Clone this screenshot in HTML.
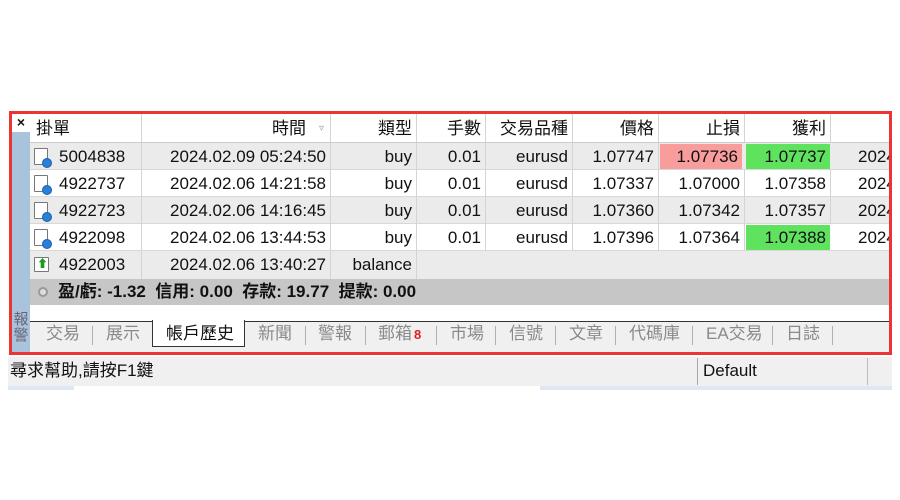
<!DOCTYPE html>
<html><head><meta charset="utf-8"><style>
*{margin:0;padding:0;box-sizing:border-box}
body{width:900px;height:500px;background:#fff;position:relative;overflow:hidden;font-family:"Liberation Sans","Noto Sans CJK TC",sans-serif;font-size:17px;color:#111}
.a{position:absolute}
.c{position:absolute;height:100%;top:0;text-align:right;padding-right:4px;line-height:27px;white-space:nowrap;overflow:hidden}
.row{position:absolute;left:30px;width:859px;height:27px;border-bottom:1px solid #d8d8d8;overflow:hidden}
.g{background:#ebebeb}
.w{background:#fff}
.bd{border-right:1px solid #d4d4d4}
.tab{position:absolute;top:322px;color:#8a8a8a;font-size:17px;line-height:24px}
.sep{position:absolute;top:326px;width:1px;height:19px;background:#b0b0b0}
.ic{position:absolute;left:4px;top:5px;width:14px;height:17px;border:1px solid #777;background:#fff;border-radius:1px}
.ic .d{position:absolute;right:-5px;bottom:-4px;width:10px;height:10px;border-radius:50%;background:#2a7fd8;border:1px solid #1a5fb0}
</style></head><body>
<div class="a" style="left:9px;top:111px;width:883px;height:244px;border:3px solid #ee3333"></div>
<div class="a" style="left:12px;top:114px;width:18px;height:238px;background:#a9c3dd"></div>
<div class="a" style="left:12px;top:114px;width:18px;height:18px;background:#fff;font-size:14px;font-weight:bold;text-align:center;line-height:16px">×</div>
<div class="a" style="left:12px;top:312px;width:18px;font-size:15px;color:#667;line-height:16px;text-align:center">報<br>警</div>
<!-- header -->
<div class="row w" style="top:114px;height:29px;border-bottom:1px solid #ccc">
<div class="c bd" style="left:0;width:112px;text-align:left;padding-left:6px;line-height:29px">掛單</div>
<div class="c bd" style="left:112px;width:189px;line-height:29px;padding-right:24px">時間<span style="position:absolute;right:6px;font-size:10px;color:#999">▿</span></div>
<div class="c bd" style="left:301px;width:86px;line-height:29px">類型</div>
<div class="c bd" style="left:387px;width:69px;line-height:29px">手數</div>
<div class="c bd" style="left:456px;width:87px;line-height:29px">交易品種</div>
<div class="c bd" style="left:543px;width:86px;line-height:29px">價格</div>
<div class="c bd" style="left:629px;width:86px;line-height:29px">止損</div>
<div class="c bd" style="left:715px;width:86px;line-height:29px">獲利</div>
</div>
<div class="row g" style="top:143px">
<div class="c bd" style="left:0;width:112px;text-align:left;padding-left:29px"><span class="ic"><span class="d"></span></span>5004838</div>
<div class="c bd" style="left:112px;width:189px">2024.02.09 05:24:50</div>
<div class="c bd" style="left:301px;width:86px">buy</div>
<div class="c bd" style="left:387px;width:69px">0.01</div>
<div class="c bd" style="left:456px;width:87px">eurusd</div>
<div class="c bd" style="left:543px;width:86px">1.07747</div>
<div class="c" style="left:630px;width:82px;height:25px;top:1px;line-height:25px;background:#f89c9c">1.07736</div>
<div class="c" style="left:716px;width:84px;height:25px;top:1px;line-height:25px;background:#5fe35f">1.07737</div>
<div class="c" style="left:801px;width:80px;text-align:left;padding-left:27px">2024</div>
</div>
<div class="row w" style="top:170px">
<div class="c bd" style="left:0;width:112px;text-align:left;padding-left:29px"><span class="ic"><span class="d"></span></span>4922737</div>
<div class="c bd" style="left:112px;width:189px">2024.02.06 14:21:58</div>
<div class="c bd" style="left:301px;width:86px">buy</div>
<div class="c bd" style="left:387px;width:69px">0.01</div>
<div class="c bd" style="left:456px;width:87px">eurusd</div>
<div class="c bd" style="left:543px;width:86px">1.07337</div>
<div class="c bd" style="left:629px;width:86px">1.07000</div>
<div class="c bd" style="left:715px;width:86px">1.07358</div>
<div class="c" style="left:801px;width:80px;text-align:left;padding-left:27px">2024</div>
</div>
<div class="row g" style="top:197px">
<div class="c bd" style="left:0;width:112px;text-align:left;padding-left:29px"><span class="ic"><span class="d"></span></span>4922723</div>
<div class="c bd" style="left:112px;width:189px">2024.02.06 14:16:45</div>
<div class="c bd" style="left:301px;width:86px">buy</div>
<div class="c bd" style="left:387px;width:69px">0.01</div>
<div class="c bd" style="left:456px;width:87px">eurusd</div>
<div class="c bd" style="left:543px;width:86px">1.07360</div>
<div class="c bd" style="left:629px;width:86px">1.07342</div>
<div class="c bd" style="left:715px;width:86px">1.07357</div>
<div class="c" style="left:801px;width:80px;text-align:left;padding-left:27px">2024</div>
</div>
<div class="row w" style="top:224px">
<div class="c bd" style="left:0;width:112px;text-align:left;padding-left:29px"><span class="ic"><span class="d"></span></span>4922098</div>
<div class="c bd" style="left:112px;width:189px">2024.02.06 13:44:53</div>
<div class="c bd" style="left:301px;width:86px">buy</div>
<div class="c bd" style="left:387px;width:69px">0.01</div>
<div class="c bd" style="left:456px;width:87px">eurusd</div>
<div class="c bd" style="left:543px;width:86px">1.07396</div>
<div class="c bd" style="left:629px;width:86px">1.07364</div>
<div class="c" style="left:716px;width:84px;height:25px;top:1px;line-height:25px;background:#5fe35f">1.07388</div>
<div class="c" style="left:801px;width:80px;text-align:left;padding-left:27px">2024</div>
</div>
<div class="row g" style="top:251px;border-bottom:none;height:28px">
<div class="c bd" style="left:0;width:112px;text-align:left;padding-left:29px"><span class="ic" style="width:15px;height:15px;top:6px"><span style="position:absolute;left:2px;top:0;color:#1a9a1a;font-size:11px;line-height:13px">⬆</span></span>4922003</div>
<div class="c bd" style="left:112px;width:189px">2024.02.06 13:40:27</div>
<div class="c bd" style="left:301px;width:86px">balance</div>
</div>
<div class="a" style="left:30px;top:279px;width:859px;height:26px;background:#c6c6c6;font-weight:bold;line-height:26px;padding-left:28px;white-space:nowrap">盈/虧: -1.32&nbsp; 信用: 0.00&nbsp; 存款: 19.77&nbsp; 提款: 0.00
<span style="position:absolute;left:8px;top:8px;width:10px;height:10px;border-radius:50%;border:2px solid #999;background:#ddd"></span></div>
<div class="a" style="left:30px;top:305px;width:859px;height:16px;background:#fff"></div>
<div class="a" style="left:30px;top:321px;width:859px;height:31px;background:#f0f0f0;border-top:1px solid #333"></div>
<div class="a" style="left:152px;top:320px;width:93px;height:27px;background:#fff;border:1px solid #333;border-top:none"></div>
<div class="tab" style="left:46px">交易</div><div class="sep" style="left:92px"></div>
<div class="tab" style="left:106px">展示</div>
<div class="tab" style="left:166px;color:#111">帳戶歷史</div>
<div class="tab" style="left:258px">新聞</div><div class="sep" style="left:305px"></div>
<div class="tab" style="left:318px">警報</div><div class="sep" style="left:365px"></div>
<div class="tab" style="left:378px">郵箱<span style="color:#e02020;font-weight:bold;font-size:13px;margin-left:2px">8</span></div><div class="sep" style="left:436px"></div>
<div class="tab" style="left:450px">市場</div><div class="sep" style="left:495px"></div>
<div class="tab" style="left:509px">信號</div><div class="sep" style="left:555px"></div>
<div class="tab" style="left:569px">文章</div><div class="sep" style="left:615px"></div>
<div class="tab" style="left:629px">代碼庫</div><div class="sep" style="left:692px"></div>
<div class="tab" style="left:706px">EA交易</div><div class="sep" style="left:772px"></div>
<div class="tab" style="left:786px">日誌</div><div class="sep" style="left:832px"></div>
<!-- status -->
<div class="a" style="left:8px;top:357px;width:884px;height:29px;background:#f0f0f0;line-height:28px;padding-left:2px">尋求幫助,請按F1鍵</div>
<div class="a" style="left:697px;top:358px;width:1px;height:27px;background:#aaa"></div>
<div class="a" style="left:703px;top:357px;line-height:28px">Default</div>
<div class="a" style="left:867px;top:358px;width:1px;height:27px;background:#bbb"></div>
<div class="a" style="left:8px;top:386px;width:66px;height:4px;background:#dde8f2"></div>
<div class="a" style="left:540px;top:386px;width:352px;height:4px;background:#dde8f2"></div>
</body></html>
